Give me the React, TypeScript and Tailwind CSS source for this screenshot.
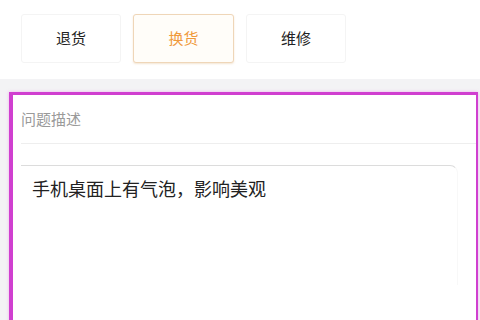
const tabs = [
  { label: "退货", active: false },
  { label: "换货", active: true },
  { label: "维修", active: false },
];

export default function App() {
  return (
    <div
      className="w-[480px] h-[320px] overflow-hidden bg-[#f3f3f5]"
      style={{ fontFamily: '"Noto Sans CJK SC", "Noto Sans", sans-serif' }}
    >
      <div className="h-[79px] bg-white pt-[14px] pl-[21px] flex gap-[12px]">
        {tabs.map((t) => (
          <div
            key={t.label}
            className={
              t.active
                ? "w-[101px] h-[49px] flex items-center justify-center rounded-[3px] border border-[#efd6b8] bg-[#fffdf9] text-[15px] text-[#f09a3c] shadow-[0_1px_2px_rgba(220,180,130,0.35)]"
                : "w-[100px] h-[49px] flex items-center justify-center rounded-[3px] border border-[#f4f4f4] bg-white text-[15px] text-[#222]"
            }
          >
            {t.label}
          </div>
        ))}
      </div>

      <div className="ml-[9px] mt-[13px] w-[469px] h-[240px] bg-white border-l-[4px] border-t-[3px] border-r-2 border-[#d03fd0] shadow-[0_0_3px_rgba(230,120,230,0.5)]">
        <div className="ml-[8px] h-[49px] flex items-center border-b border-[#eeeeee] text-[15px] text-[#9a9a9a]">
          问题描述
        </div>
        <div className="pt-[21px] pl-[8px] pr-[18px]">
          <div className="h-[120px] rounded-tr-[8px] border-t border-r border-t-[#dcdcdc] border-r-[#f8f8f8] pl-[11px] pt-[10px] text-[18px] leading-[24px] text-[#222]">
            手机桌面上有气泡，影响美观
          </div>
        </div>
      </div>
    </div>
  );
}
